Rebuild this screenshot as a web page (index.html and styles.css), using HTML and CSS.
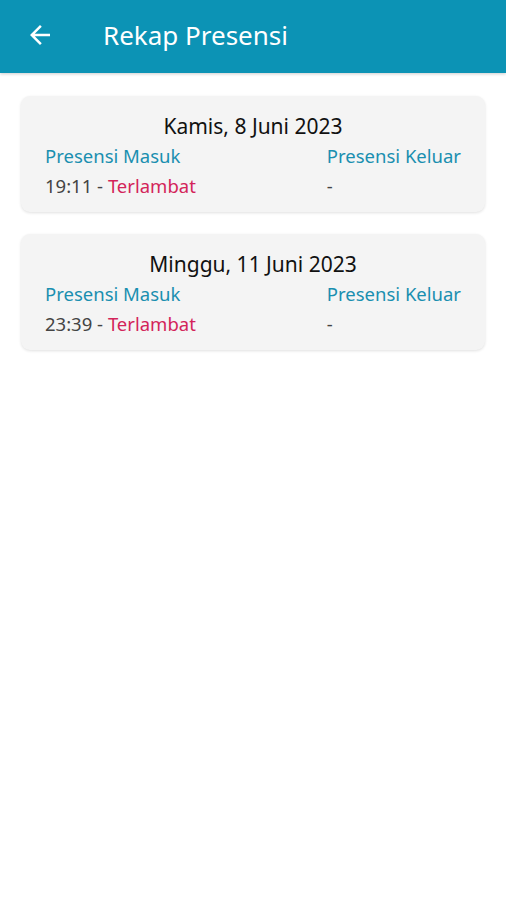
FILE: index.html
```html
<!DOCTYPE html>
<html lang="id">
<head>
  <meta charset="UTF-8">
  <title>Rekap Presensi</title>
  <link rel="stylesheet" href="styles.css">
</head>
<body>
  <div class="header">
    <svg class="back" width="30" height="30" viewBox="0 0 24 24">
      <path d="M20 11H7.83l5.59-5.59L12 4l-8 8 8 8 1.41-1.41L7.83 13H20v-2z" fill="#fff"/>
    </svg>
    <h1>Rekap Presensi</h1>
  </div>

  <div class="daftar">
    <div class="kartu">
      <div class="tanggal">Kamis, 8 Juni 2023</div>
      <div class="baris">
        <div class="kolom">
          <div class="label">Presensi Masuk</div>
          <div class="jam">19:11 - <span class="telat">Terlambat</span></div>
        </div>
        <div class="kolom">
          <div class="label">Presensi Keluar</div>
          <div class="jam">-</div>
        </div>
      </div>
    </div>

    <div class="kartu">
      <div class="tanggal">Minggu, 11 Juni 2023</div>
      <div class="baris">
        <div class="kolom">
          <div class="label">Presensi Masuk</div>
          <div class="jam">23:39 - <span class="telat">Terlambat</span></div>
        </div>
        <div class="kolom">
          <div class="label">Presensi Keluar</div>
          <div class="jam">-</div>
        </div>
      </div>
    </div>
  </div>
</body>
</html>
```

FILE: styles.css
```css
body {
  margin: 0;
  font-family: "Noto Sans", sans-serif;
  background: white;
}
.header {
  height: 73px;
  box-sizing: border-box;
  padding: 0 0 3px 25px;
  background-color: #0c93b5;
  display: flex;
  align-items: center;
  box-shadow: 0 1px 3px rgba(0, 0, 0, 0.2);
}
.back {
  display: block;
}
h1 {
  margin: 0 0 0 48px;
  font-size: 26px;
  font-weight: normal;
  color: white;
}
.daftar {
  padding: 23px 21px;
  display: flex;
  flex-direction: column;
  gap: 22px;
}
.kartu {
  background-color: #f4f4f4;
  border-radius: 9px;
  padding: 15px 24px 12px;
  box-shadow: 0 1px 3px rgba(0, 0, 0, 0.12);
}
.tanggal {
  text-align: center;
  font-size: 21px;
  line-height: 30px;
  color: #111;
}
.baris {
  display: flex;
  justify-content: space-between;
}
.label {
  font-size: 18.5px;
  line-height: 30px;
  color: #1a8fb0;
}
.jam {
  font-size: 18.5px;
  line-height: 29px;
  color: #444;
}
.telat {
  color: #d3245a;
}
```
